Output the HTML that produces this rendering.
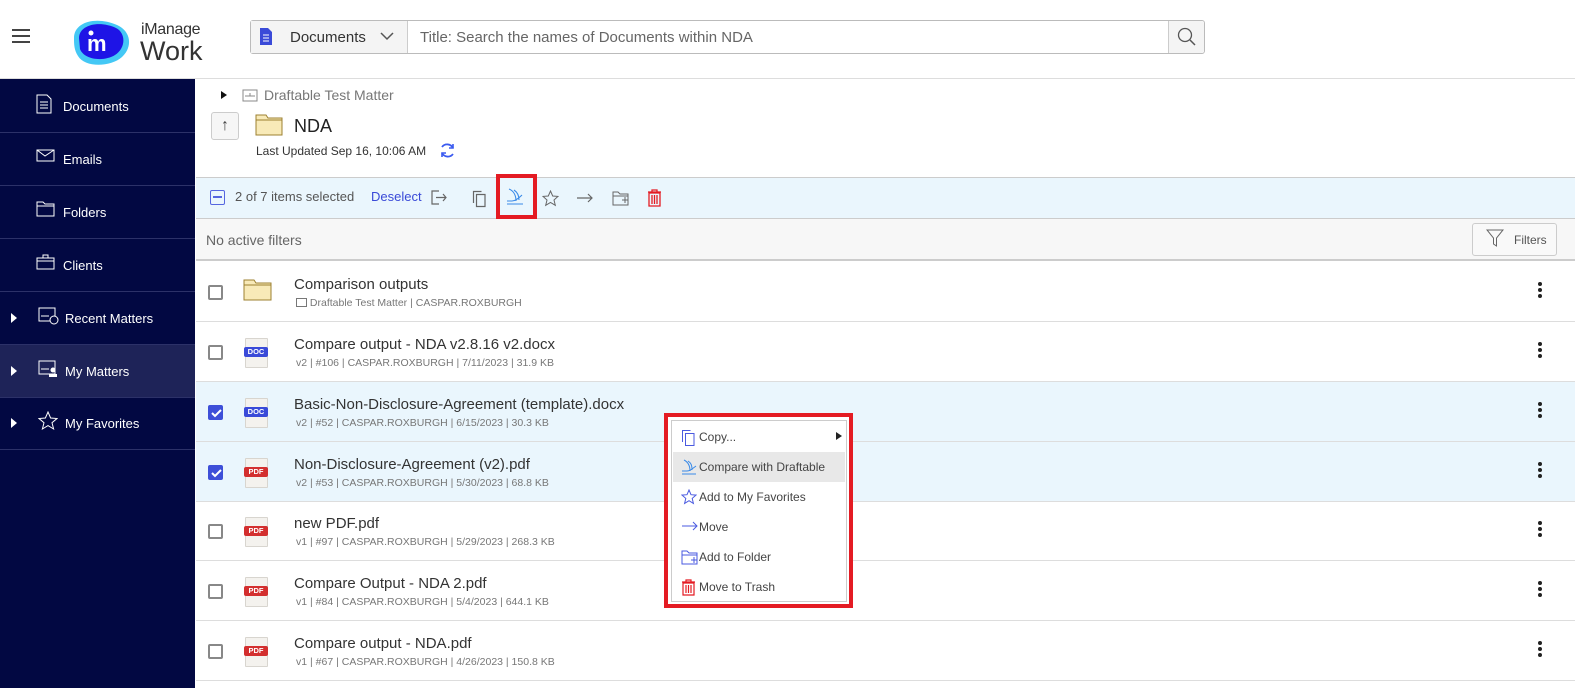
<!DOCTYPE html>
<html><head><meta charset="utf-8"><style>
*{box-sizing:border-box;margin:0;padding:0}
body{width:1575px;height:688px;overflow:hidden;font-family:"Liberation Sans",sans-serif;background:#fff;position:relative;color:#333}
.a{position:absolute}
.side{left:0;top:79px;width:195px;height:609px;background:#020842}
.si{position:absolute;left:0;width:195px;height:53px;border-bottom:1px solid #2c3168;color:#fff;font-size:13px}
.si span{position:absolute;left:63px;top:19px}
.si svg{position:absolute;left:36px;top:14px}
.tri{position:absolute;left:11px;top:21px;width:0;height:0;border-left:6px solid #fff;border-top:5px solid transparent;border-bottom:5px solid transparent}
.row{position:absolute;left:196px;width:1379px;height:60px;border-bottom:1px solid #ddd}
.row .cb{position:absolute;left:12px;top:23px;width:15px;height:15px;border:2px solid #888;border-radius:2px;background:#fff}
.row .cb.on{background:#3d4fd8;border-color:#3d4fd8}
.row .t{position:absolute;left:98px;top:14px;font-size:15px;color:#333}
.row .m{position:absolute;left:100px;top:35px;font-size:10.5px;color:#777}
.row .dots{position:absolute;left:1342px;top:20px;width:4px}
.row .dots i{display:block;width:4px;height:4px;border-radius:2px;background:#222;margin-bottom:2px}
.fi{position:absolute;left:49px;top:16px;width:23px;height:30px;background:#f4f2ee;border:1px solid #d8d5cf;border-radius:1px}
.fi b{position:absolute;left:-2px;top:8px;width:24px;height:10px;font-size:7.5px;color:#fff;text-align:center;line-height:10px;border-radius:2px;font-family:"Liberation Sans",sans-serif}
.mi{position:absolute;left:673px;width:172px;height:30px;font-size:12px;color:#444}
.mi span{position:absolute;left:26px;top:8px}
.mi svg{position:absolute;left:8px;top:7px}
</style></head><body>
<!-- header -->
<div class="a" style="left:12px;top:29px;width:18px;height:2px;background:#444;box-shadow:0 6px 0 #444,0 12px 0 #444"></div>
<svg class="a" style="left:70px;top:16px" width="66" height="52"><path d="M4 22 C4 6 26 0 47 9 C61 15 63 31 52 41 C41 51 15 52 8 40 C4 34 4 28 4 22Z" fill="#44c8f5"/><path d="M9 22 C9 9 29 4 46 12 C56 17 56 32 45 39 C34 46 14 44 10 33Z" fill="#1e14e6"/><text x="17" y="35" fill="#fff" font-size="22" font-weight="bold" font-family="Liberation Sans">m</text><circle cx="21" cy="17" r="2.5" fill="#fff"/></svg>
<div class="a" style="left:141px;top:21px;font-size:16px;color:#333;letter-spacing:-0.3px">iManage</div>
<div class="a" style="left:140px;top:36px;font-size:27px;color:#333">Work</div>
<div class="a" style="left:250px;top:20px;width:955px;height:34px;border:1px solid #bbb;border-radius:3px;background:#fff"></div>
<div class="a" style="left:251px;top:21px;width:157px;height:32px;background:#f4f4f4;border-right:1px solid #ccc"></div>
<svg class="a" style="left:260px;top:28px" width="12" height="17"><path d="M0 0h8l4 4v13H0z" fill="#3a4ad8"/><path d="M3 7h6M3 10h6M3 13h6" stroke="#fff" stroke-width="1"/></svg>
<div class="a" style="left:290px;top:29px;font-size:15px;color:#333">Documents</div>
<svg class="a" style="left:380px;top:32px" width="14" height="9"><path d="M1 1l6 6 6-6" stroke="#555" fill="none" stroke-width="1.5"/></svg>
<div class="a" style="left:420px;top:29px;font-size:15px;color:#666">Title: Search the names of Documents within NDA</div>
<div class="a" style="left:1168px;top:21px;width:36px;height:32px;background:#f4f4f4;border-left:1px solid #ccc;border-radius:0 3px 3px 0"></div>
<svg class="a" style="left:1177px;top:27px" width="20" height="20"><circle cx="8" cy="8" r="6.5" stroke="#555" fill="none" stroke-width="1.3"/><path d="M13 13l5 5" stroke="#555" stroke-width="1.5"/></svg>
<div class="a" style="left:0;top:78px;width:1575px;height:1px;background:#ddd"></div>
<!-- sidebar -->
<div class="a side"></div>
<div class="si" style="top:80px"><svg width="16" height="20"><path d="M1 1h10l4 4v14H1z" stroke="#fff" fill="none"/><path d="M4 8h8M4 11h8M4 14h8" stroke="#fff"/></svg><span>Documents</span></div>
<div class="si" style="top:133px"><svg width="20" height="18"><path d="M1 3h17v11H1z M1 3l8 6 9-6" stroke="#fff" fill="none"/></svg><span>Emails</span></div>
<div class="si" style="top:186px"><svg width="20" height="18"><path d="M1 2h6l2 2h9v12H1z M1 6h17" stroke="#fff" fill="none"/></svg><span>Folders</span></div>
<div class="si" style="top:239px"><svg width="20" height="18"><path d="M1 5h17v11H1z M7 5V2h5v3 M1 8h17" stroke="#fff" fill="none"/></svg><span>Clients</span></div>
<div class="si" style="top:292px"><i class="tri"></i><svg width="22" height="20" style="left:38px"><path d="M1 2h16v13H1z M3 10h8" stroke="#fff" fill="none"/><circle cx="16" cy="14" r="4" stroke="#fff" fill="#020842"/></svg><span style="left:65px">Recent Matters</span></div>
<div class="si" style="top:345px;background:#1e2358"><i class="tri"></i><svg width="22" height="20" style="left:38px"><path d="M1 2h16v13H1z M3 10h8" stroke="#fff" fill="none"/><circle cx="15" cy="11" r="2.5" fill="#fff"/><path d="M11 18h8v-3h-8z" fill="#fff"/></svg><span style="left:65px">My Matters</span></div>
<div class="si" style="top:397px"><i class="tri"></i><svg width="20" height="20" style="left:38px"><path d="M10 1l2.6 6 6.4.5-5 4.2 1.6 6.3L10 14.6 4.4 18l1.6-6.3-5-4.2 6.4-.5z" stroke="#fff" fill="none"/></svg><span style="left:65px">My Favorites</span></div>
<!-- breadcrumb -->
<div class="a" style="left:221px;top:91px;border-left:6px solid #111;border-top:4px solid transparent;border-bottom:4px solid transparent"></div>
<svg class="a" style="left:242px;top:89px" width="16" height="13"><path d="M1 1h14v11H1z M3 7h10 M8 4v3" stroke="#888" fill="none"/></svg>
<div class="a" style="left:264px;top:87px;font-size:14px;color:#777">Draftable Test Matter</div>
<div class="a" style="left:211px;top:112px;width:28px;height:28px;border:1px solid #ccc;border-radius:3px;background:#f6f6f6;text-align:center;font-size:16px;line-height:26px;color:#444">↑</div>
<svg class="a" style="left:255px;top:114px" width="28" height="22"><path d="M1 1h10l2 3h14v17H1z" fill="#f8eab8" stroke="#9c8030"/><path d="M1 6h26" stroke="#9c8030"/></svg>
<div class="a" style="left:294px;top:116px;font-size:18px;color:#222">NDA</div>
<div class="a" style="left:256px;top:144px;font-size:12px;color:#333">Last Updated Sep 16, 10:06 AM</div>
<svg class="a" style="left:439px;top:142px" width="17" height="17"><path d="M14 6A6.5 6.5 0 0 0 3 5 M3 11A6.5 6.5 0 0 0 14 12" stroke="#3a5af0" stroke-width="1.8" fill="none"/><path d="M14 2v4h-4M3 15v-4h4" stroke="#3a5af0" stroke-width="1.6" fill="none"/></svg>
<!-- selection bar -->
<div class="a" style="left:196px;top:177px;width:1379px;height:42px;background:#eaf6fd;border-top:1px solid #ccc;border-bottom:1px solid #ccc"></div>
<div class="a" style="left:210px;top:190px;width:15px;height:15px;border:1.5px solid #5566e0;border-radius:2px"><div style="margin:5px 2px;height:1.5px;background:#5566e0"></div></div>
<div class="a" style="left:235px;top:189px;font-size:13px;color:#555">2 of 7 items selected</div>
<div class="a" style="left:371px;top:189px;font-size:13px;color:#3a4ad8">Deselect</div>
<svg class="a" style="left:431px;top:190px" width="16" height="15"><path d="M8 1H1v13h7 M5 7.5h10 M12 4l3 3.5-3 3.5" stroke="#666" fill="none" stroke-width="1.2"/></svg>
<svg class="a" style="left:472px;top:190px" width="15" height="18"><path d="M1.5 13V1.5h8 M4.5 4.5h8.5v12H4.5z" stroke="#666" fill="none" stroke-width="1.2"/></svg>
<div class="a" style="left:496px;top:174px;width:41px;height:45px;border:4px solid #e41b23"></div>
<svg class="a" style="left:506px;top:188px" width="18" height="18"><path d="M3 1c5 2 7 7 7 12 M8 2c3 2 5 5 5 10 M1 13h5c3 0 6-2 10-6 M1 16h16" stroke="#3a8ae8" fill="none" stroke-width="1.1"/></svg>
<svg class="a" style="left:542px;top:190px" width="17" height="17"><path d="M8.5 1l2.2 5 5.3.4-4 3.6 1.3 5.3-4.8-2.9-4.8 2.9 1.3-5.3-4-3.6 5.3-.4z" stroke="#666" fill="none"/></svg>
<svg class="a" style="left:576px;top:192px" width="18" height="12"><path d="M1 6h15 M12 2l4 4-4 4" stroke="#666" fill="none" stroke-width="1.2"/></svg>
<svg class="a" style="left:612px;top:190px" width="18" height="17"><path d="M1 2h5l2 2h8v11H1z M1 6h15" stroke="#666" fill="none"/><path d="M10 10h6M13 7v6" stroke="#666"/></svg>
<svg class="a" style="left:647px;top:189px" width="15" height="18"><path d="M1 3h13 M5 3V1h5v2 M2 4h11v13H2z M5 6v9M7.5 6v9M10 6v9" stroke="#e41b23" fill="none" stroke-width="1.3"/></svg>
<!-- filter bar -->
<div class="a" style="left:196px;top:219px;width:1379px;height:42px;background:#f7f7f7;border-bottom:2px solid #ccc"></div>
<div class="a" style="left:206px;top:232px;font-size:14px;color:#666">No active filters</div>
<div class="a" style="left:1472px;top:223px;width:85px;height:33px;border:1px solid #ccc;border-radius:3px;background:#f9f9f9"></div>
<svg class="a" style="left:1486px;top:229px" width="18" height="18"><path d="M1 1h16l-6.5 8v8l-3-2V9z" stroke="#666" fill="none"/></svg>
<div class="a" style="left:1514px;top:233px;font-size:12px;color:#555">Filters</div>
<!-- rows -->
<div class="row" style="top:262px"><i class="cb"></i><svg style="position:absolute;left:47px;top:17px" width="30" height="22"><path d="M1 1h10l2 3h15v17H1z" fill="#f8eab8" stroke="#9c8030"/><path d="M1 6h27" stroke="#9c8030"/></svg><div class="t">Comparison outputs</div><div class="m" style="left:100px"><span style="display:inline-block;width:11px;height:9px;border:1px solid #777;vertical-align:-1px"></span> Draftable Test Matter | CASPAR.ROXBURGH</div><div class="dots"><i></i><i></i><i></i></div></div>
<div class="row" style="top:322px"><i class="cb"></i><div class="fi"><b style="background:#3a4ad8">DOC</b></div><div class="t">Compare output - NDA v2.8.16 v2.docx</div><div class="m">v2 | #106 | CASPAR.ROXBURGH | 7/11/2023 | 31.9 KB</div><div class="dots"><i></i><i></i><i></i></div></div>
<div class="row" style="top:382px;background:#eaf6fd"><i class="cb on"><svg width="12" height="12" style="position:absolute;left:0;top:0"><path d="M2 6l3 3 6-6" stroke="#fff" stroke-width="2" fill="none"/></svg></i><div class="fi"><b style="background:#3a4ad8">DOC</b></div><div class="t">Basic-Non-Disclosure-Agreement (template).docx</div><div class="m">v2 | #52 | CASPAR.ROXBURGH | 6/15/2023 | 30.3 KB</div><div class="dots"><i></i><i></i><i></i></div></div>
<div class="row" style="top:442px;background:#eaf6fd"><i class="cb on"><svg width="12" height="12" style="position:absolute;left:0;top:0"><path d="M2 6l3 3 6-6" stroke="#fff" stroke-width="2" fill="none"/></svg></i><div class="fi"><b style="background:#d32f2f">PDF</b></div><div class="t">Non-Disclosure-Agreement (v2).pdf</div><div class="m">v2 | #53 | CASPAR.ROXBURGH | 5/30/2023 | 68.8 KB</div><div class="dots"><i></i><i></i><i></i></div></div>
<div class="row" style="top:501px"><i class="cb"></i><div class="fi"><b style="background:#d32f2f">PDF</b></div><div class="t">new PDF.pdf</div><div class="m">v1 | #97 | CASPAR.ROXBURGH | 5/29/2023 | 268.3 KB</div><div class="dots"><i></i><i></i><i></i></div></div>
<div class="row" style="top:561px"><i class="cb"></i><div class="fi"><b style="background:#d32f2f">PDF</b></div><div class="t">Compare Output - NDA 2.pdf</div><div class="m">v1 | #84 | CASPAR.ROXBURGH | 5/4/2023 | 644.1 KB</div><div class="dots"><i></i><i></i><i></i></div></div>
<div class="row" style="top:621px"><i class="cb"></i><div class="fi"><b style="background:#d32f2f">PDF</b></div><div class="t">Compare output - NDA.pdf</div><div class="m">v1 | #67 | CASPAR.ROXBURGH | 4/26/2023 | 150.8 KB</div><div class="dots"><i></i><i></i><i></i></div></div>
<!-- context menu -->
<div class="a" style="left:664px;top:413px;width:189px;height:195px;border:4px solid #e41b23;background:#fff"></div>
<div class="a" style="left:671px;top:420px;width:176px;height:182px;border:1px solid #ccc;background:#fff"></div>
<div class="mi" style="top:422px"><svg width="15" height="18"><path d="M1.5 13V1.5h8 M4.5 4.5h8.5v12H4.5z" stroke="#4a5ae0" fill="none"/></svg><span>Copy...</span><i style="position:absolute;left:163px;top:10px;border-left:6px solid #222;border-top:4px solid transparent;border-bottom:4px solid transparent"></i></div>
<div class="mi" style="top:452px;background:#e8e8e8"><svg width="16" height="16"><path d="M3 1c4 2 6 6 6 11 M7 2c3 2 4 4 4 9 M1 12h5c3 0 5-2 9-5 M1 15h14" stroke="#3a8ae8" fill="none"/></svg><span>Compare with Draftable</span></div>
<div class="mi" style="top:482px"><svg width="16" height="16"><path d="M8 1l2 4.7 5 .4-3.8 3.3 1.2 5L8 11.7 3.6 14.4l1.2-5L1 6.1l5-.4z" stroke="#4a5ae0" fill="none"/></svg><span>Add to My Favorites</span></div>
<div class="mi" style="top:512px"><svg width="18" height="14"><path d="M1 7h15 M12 3l4 4-4 4" stroke="#4a5ae0" fill="none"/></svg><span>Move</span></div>
<div class="mi" style="top:542px"><svg width="18" height="17"><path d="M1 2h5l2 2h8v11H1z M1 6h15 M10 11h6M13 8v6" stroke="#4a5ae0" fill="none"/></svg><span>Add to Folder</span></div>
<div class="mi" style="top:572px"><svg width="15" height="17"><path d="M1 3h13 M5 3V1h5v2 M2 4h11v12H2z M5 6v8M7.5 6v8M10 6v8" stroke="#e41b23" fill="none" stroke-width="1.2"/></svg><span>Move to Trash</span></div>
</body></html>
